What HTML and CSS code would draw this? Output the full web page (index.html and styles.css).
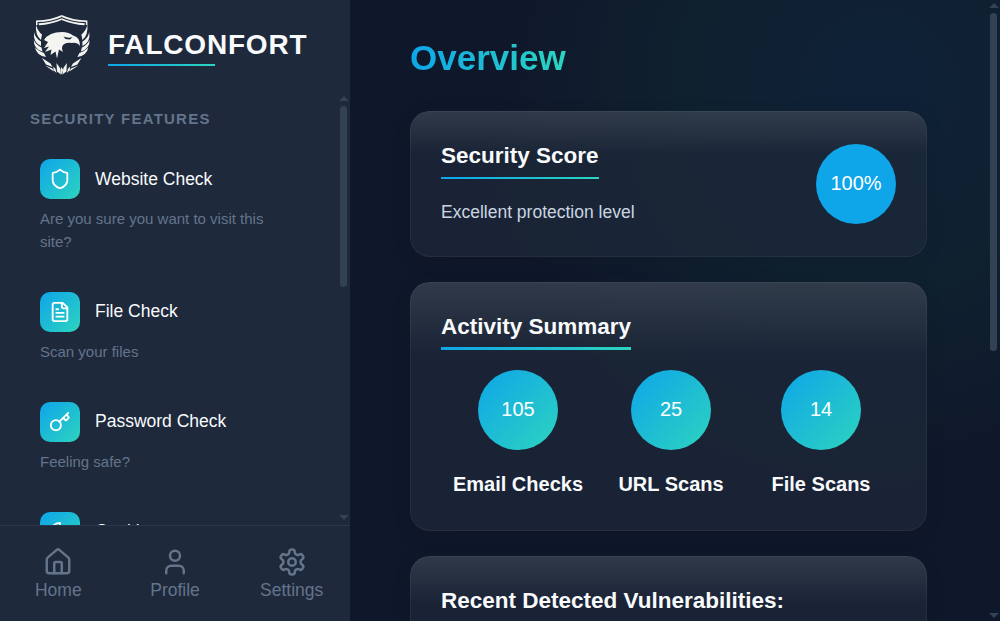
FILE: index.html
```html
<!DOCTYPE html>
<html lang="en">
<head>
<meta charset="utf-8">
<title>Falconfort</title>
<link rel="stylesheet" href="styles.css">
</head>
<body>
<div class="app">
  <aside class="sidebar">
    <header class="brand">
      <svg class="logo" viewBox="0 0 90 80" fill="#f4f4f1">
        <defs>
          <g id="half">
            <path d="M16 15.500Q31 15 41.700 10L41.700 12Q31 17 17.500 17L17.500 20L16 20Z"/>
            <path d="M18.500 18.300Q31 18 41.700 13.300L41.700 15Q31 19.500 19 20.300Z"/>
            <path d="M16 19.500Q17.500 26 22 29.500L21 35Q15 30 16 19.500Z"/>
            <path d="M14.200 27Q15 33 21 36.500L21 41Q12.500 37 14.200 27Z"/>
            <path d="M13.800 35Q16 40 21.500 42.500L22.500 46.500Q13.500 44 13.800 35Z"/>
            <path d="M15 42.500Q19 46.500 24 48L26 52Q17 51 15 42.500Z"/>
            <path d="M22 53L30.500 58.500L32.500 62L26 59.500Z"/>
            <path d="M25 60.500L32.500 63.500L34 66.500Z"/>
            <path d="M36.500 58L40 63L41 69.500L37 66.500ZM33.500 61.500L35.500 64L36.500 68L33.500 65Z"/>
          </g>
        </defs>
        <use href="#half"/>
        <use href="#half" transform="translate(83.400 0) scale(-1 1)"/>
        <path d="M41.700 62L43 65L41.700 70L40.400 65Z"/>
        <path d="M24 35Q29 27 42 27Q49 27 53 30.500Q60 32 60 41Q57 37 52 38Q46 37 43 40Q41 43 43 47L39 44.500L37 53.500L35.500 46.500L30.500 50L31.500 44.500L25 47L29 41.500L24 43L28 37Z"/>
        <path d="M43.500 31.500Q48 33.500 52.500 32L50 34.500L45.500 34Z" fill="#1e293b"/>
      </svg>
      <div class="brand-name">FALCONFORT</div>
    </header>
    <div class="feature-scroll">
      <nav class="features">
        <h2 class="section-title">SECURITY FEATURES</h2>
        <div class="feature">
          <div class="feature-head"><span class="tile"><svg class="icon" viewBox="0 0 24 24"><path d="M20 13c0 5-3.500 7.500-7.660 8.950a1 1 0 0 1-.67-.01C7.500 20.500 4 18 4 13V6a1 1 0 0 1 1-1c2 0 4.500-1.200 6.240-2.720a1.170 1.170 0 0 1 1.520 0C14.510 3.810 17 5 19 5a1 1 0 0 1 1 1z"/></svg></span><span>Website Check</span></div>
          <p class="feature-text">Are you sure you want to visit this site?</p>
        </div>
        <div class="feature">
          <div class="feature-head"><span class="tile"><svg class="icon" viewBox="0 0 24 24"><path d="M15 2H6a2 2 0 0 0-2 2v16a2 2 0 0 0 2 2h12a2 2 0 0 0 2-2V7Z"/><path d="M14 2v4a2 2 0 0 0 2 2h4M10 9H8M16 13H8M16 17H8"/></svg></span><span class="raised">File Check</span></div>
          <p class="feature-text">Scan your files</p>
        </div>
        <div class="feature">
          <div class="feature-head"><span class="tile"><svg class="icon" viewBox="0 0 24 24"><path d="m15.500 7.500 2.300 2.300a1 1 0 0 0 1.400 0l2.100-2.100a1 1 0 0 0 0-1.400L19 4M21 2l-9.600 9.600"/><circle cx="7.500" cy="15.500" r="5.500"/></svg></span><span class="raised">Password Check</span></div>
          <p class="feature-text">Feeling safe?</p>
        </div>
        <div class="feature">
          <div class="feature-head"><span class="tile"><svg class="icon" viewBox="0 0 24 24"><path d="M12 2a10 10 0 1 0 10 10 4 4 0 0 1-5-5 4 4 0 0 1-5-5M8.500 8.500v.01M16 15.500v.01M12 12v.01M11 17v.01M7 14v.01"/></svg></span><span class="raised">Cookies</span></div>
        </div>
      </nav>
      <div class="scrollbar"><i class="arrow up"></i><i class="thumb side-thumb"></i><i class="arrow down"></i></div>
    </div>
    <footer class="tabs">
      <a class="tab"><svg class="icon tab-icon" viewBox="0 0 24 24"><path d="M15 21v-8a1 1 0 0 0-1-1h-4a1 1 0 0 0-1 1v8"/><path d="M3 10a2 2 0 0 1 .709-1.528l7-5.999a2 2 0 0 1 2.582 0l7 5.999A2 2 0 0 1 21 10v9a2 2 0 0 1-2 2H5a2 2 0 0 1-2-2z"/></svg>Home</a>
      <a class="tab"><svg class="icon tab-icon" viewBox="0 0 24 24"><path d="M19 21v-2a4 4 0 0 0-4-4H9a4 4 0 0 0-4 4v2"/><circle cx="12" cy="7" r="4"/></svg>Profile</a>
      <a class="tab"><svg class="icon tab-icon" viewBox="0 0 24 24"><path d="M12.220 2h-.44a2 2 0 0 0-2 2v.18a2 2 0 0 1-1 1.730l-.43.25a2 2 0 0 1-2 0l-.15-.08a2 2 0 0 0-2.730.73l-.22.38a2 2 0 0 0 .73 2.730l.15.1a2 2 0 0 1 1 1.720v.51a2 2 0 0 1-1 1.740l-.15.09a2 2 0 0 0-.73 2.730l.22.38a2 2 0 0 0 2.730.73l.15-.08a2 2 0 0 1 2 0l.43.25a2 2 0 0 1 1 1.730V20a2 2 0 0 0 2 2h.44a2 2 0 0 0 2-2v-.18a2 2 0 0 1 1-1.730l.43-.25a2 2 0 0 1 2 0l.15.08a2 2 0 0 0 2.730-.73l.22-.39a2 2 0 0 0-.73-2.730l-.15-.08a2 2 0 0 1-1-1.740v-.5a2 2 0 0 1 1-1.740l.15-.09a2 2 0 0 0 .73-2.730l-.22-.38a2 2 0 0 0-2.730-.73l-.15.08a2 2 0 0 1-2 0l-.43-.25a2 2 0 0 1-1-1.730V4a2 2 0 0 0-2-2z"/><circle cx="12" cy="12" r="3"/></svg>Settings</a>
    </footer>
  </aside>
  <main class="main">
    <div class="content">
      <h1 class="title">Overview</h1>
      <section class="card score">
        <div>
          <h2 class="card-title">Security Score</h2>
          <p class="level">Excellent protection level</p>
        </div>
        <div class="circle solid">100%</div>
      </section>
      <section class="card activity">
        <h2 class="card-title thick">Activity Summary</h2>
        <div class="stats">
          <div class="stat"><div class="circle">105</div><h3 class="stat-name">Email Checks</h3></div>
          <div class="stat"><div class="circle">25</div><h3 class="stat-name">URL Scans</h3></div>
          <div class="stat"><div class="circle">14</div><h3 class="stat-name">File Scans</h3></div>
        </div>
      </section>
      <section class="card vulnerabilities">
        <h2 class="card-title">Recent Detected Vulnerabilities:</h2>
      </section>
    </div>
    <div class="scrollbar"><i class="arrow up"></i><i class="thumb main-thumb"></i><i class="arrow down"></i></div>
  </main>
</div>
</body>
</html>
```
FILE: styles.css
```css
* { box-sizing: border-box; margin: 0; padding: 0; }
body {
  height: 621px;
  overflow: hidden;
  font-family: "Liberation Sans", Arial, sans-serif;
  color: #f8fafc;
  background: #0f172a;
}
.app { display: flex; height: 621px; overflow: hidden; }
.sidebar { display: flex; flex-direction: column; width: 350px; flex: none; background: #1e293b; }
.brand { display: flex; height: 94px; flex: none; padding: 5px 0 0 20px; }
.logo { width: 90px; height: 80px; flex: none; margin-right: -2px; }
.brand-name {
  align-self: flex-start;
  margin-top: 22px;
  height: 39px;
  line-height: 35px;
  font-size: 28px;
  font-weight: 700;
  letter-spacing: 0.8px;
  background: linear-gradient(90deg, #0ea5e9, #2dd4bf) 0 100% / 107px 2px no-repeat;
}
.feature-scroll { display: flex; flex: 1; min-height: 0; overflow: hidden; }
.features { flex: 1; min-width: 0; padding: 16px 20px 0 30px; }
.section-title { font-size: 15px; line-height: 18px; letter-spacing: 1.25px; color: #64748b; margin-bottom: 21px; }
.feature { padding: 10px; margin-bottom: 19px; }
.feature-head { display: flex; align-items: center; gap: 15px; font-size: 17.500px; }
.raised { padding-bottom: 2px; }
.tile {
  display: grid; place-items: center; width: 40px; height: 40px;
  border-radius: 10px; color: #fff;
  background: linear-gradient(135deg, #0ea5e9, #2dd4bf);
}
.icon { width: 22px; height: 22px; fill: none; stroke: currentColor; stroke-width: 2; stroke-linecap: round; stroke-linejoin: round; }
.feature-text { width: 240px; margin-top: 8px; font-size: 15px; line-height: 23px; color: #64748b; }
.tabs { display: flex; height: 96px; flex: none; padding-top: 21px; border-top: 1px solid #2b384c; }
.tab { display: flex; flex: 1; flex-direction: column; align-items: center; font-size: 17.500px; line-height: 20px; gap: 3px; color: #64748b; }
.tab-icon { width: 30px; height: 30px; }
.main {
  display: flex; flex: 1; min-width: 0;
  background: radial-gradient(circle at 530px 90px, rgba(14,165,233,.07), rgba(16,185,129,.055) 200px, transparent 400px), #0f172a;
}
.content { flex: 1; min-width: 0; padding: 38px 60px 0; }
.title {
  width: max-content; font-size: 35px; line-height: 40px; margin-bottom: 33px;
  background: linear-gradient(90deg, #0ea5e9, #2dd4bf);
  background-clip: text; color: transparent;
}
.card {
  width: 517px; margin-bottom: 25px; padding: 30px;
  border: 1px solid rgba(255,255,255,.05); border-radius: 20px;
  background: linear-gradient(180deg, rgba(255,255,255,.1), transparent 30%) border-box no-repeat, rgba(30,41,59,.7);
  box-shadow: 0 4px 20px rgba(0,0,0,.08);
}
.score { display: flex; justify-content: space-between; height: 146px; }
.activity { height: 249px; }
.vulnerabilities { height: 160px; }
.card-title {
  width: max-content; height: 37px; font-size: 22.500px; line-height: 28px;
  background: linear-gradient(90deg, #0ea5e9, #2dd4bf) 0 100% / 100% 2px no-repeat;
}
.thick { background-size: 100% 3px; }
.level { margin-top: 22px; font-size: 17.500px; line-height: 22px; color: #cbd5e1; }
.circle {
  display: grid; place-items: center; width: 80px; height: 80px; padding-bottom: 2px; border-radius: 50%;
  font-size: 20px; color: #fff; background: linear-gradient(135deg, #0ea5e9, #2dd4bf);
}
.solid { margin-top: 2px; background: #0ea5e9; }
.stats { display: grid; grid-template-columns: 154px 152px 148px; margin-top: 20px; }
.stat { display: flex; flex-direction: column; align-items: center; gap: 22px; }
.stat-name { font-size: 20px; line-height: 24px; }
.scrollbar { display: flex; flex-direction: column; align-items: center; width: 13px; flex: none; }
.thumb { width: 7px; border-radius: 4px; background: #334155; }
.side-thumb { height: 181px; }
.main-thumb { height: 338px; }
.arrow { border: 5px solid transparent; }
.up { border-top: 0; border-bottom-color: #334155; margin: 2px 0 5px; }
.main .up { margin: 3px 0 5px; }
.down { border-bottom: 0; border-top-color: #334155; margin: auto 0 5px; }
.main .down { margin-bottom: 3px; }
```
